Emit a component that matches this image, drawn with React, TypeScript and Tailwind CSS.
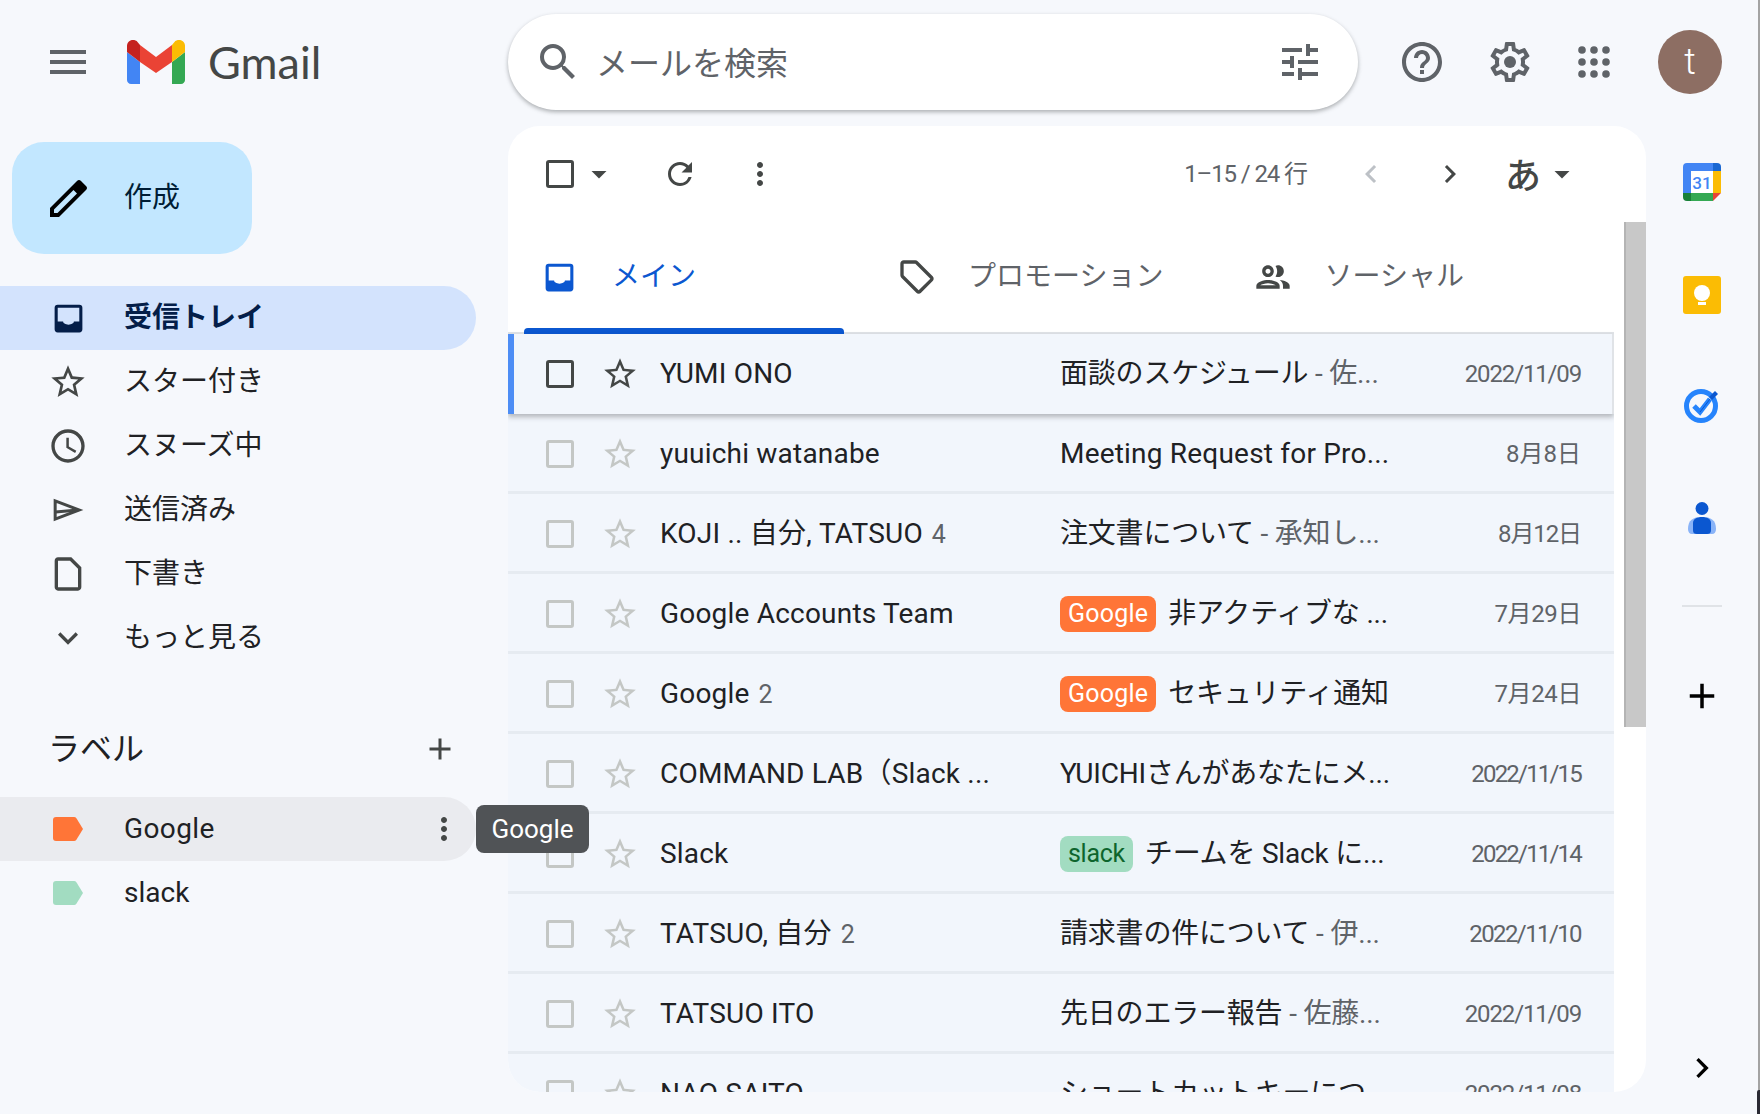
import React from "react";

const jp = "font-['Roboto','Noto_Sans_CJK_JP',sans-serif]";

const Icon = ({ d, className, children }: any) => (
  <svg viewBox="0 0 24 24" fill="currentColor" className={className}>
    {d && <path d={d} fillRule="evenodd" />}
    {children}
  </svg>
);

const paths = {
  menu: "M3 18h18v-2H3v2zm0-5h18v-2H3v2zm0-7v2h18V6H3z",
  search:
    "M15.5 14h-.79l-.28-.27A6.471 6.471 0 0 0 16 9.5 6.5 6.5 0 1 0 9.5 16c1.61 0 3.09-.59 4.23-1.57l.27.28v.79l5 4.99L20.49 19l-4.99-5zm-6 0C7.01 14 5 11.99 5 9.5S7.01 5 9.5 5 14 7.01 14 9.5 11.99 14 9.5 14z",
  tune: "M3 17v2h6v-2H3zM3 5v2h10V5H3zm10 16v-2h8v-2h-8v-2h-2v6h2zM7 9v2H3v2h4v2h2V9H7zm14 4v-2H11v2h10zm-6-4h2V7h4V5h-4V3h-2v6z",
  help: "M11 18h2v-2h-2v2zm1-16C6.48 2 2 6.48 2 12s4.48 10 10 10 10-4.48 10-10S17.52 2 12 2zm0 18c-4.41 0-8-3.59-8-8s3.59-8 8-8 8 3.59 8 8-3.59 8-8 8zm0-14c-2.21 0-4 1.79-4 4h2c0-1.1.9-2 2-2s2 .9 2 2c0 2-3 1.75-3 5h2c0-2.25 3-2.5 3-5 0-2.21-1.79-4-4-4z",
  gear: "M19.43 12.98c.04-.32.07-.64.07-.98 0-.34-.03-.66-.07-.98l2.11-1.65c.19-.15.24-.42.12-.64l-2-3.46c-.09-.16-.26-.25-.44-.25-.06 0-.12.01-.17.03l-2.49 1c-.52-.4-1.08-.73-1.69-.98l-.38-2.65C14.46 2.18 14.25 2 14 2h-4c-.25 0-.46.18-.49.42l-.38 2.65c-.61.25-1.17.59-1.69.98l-2.49-1c-.06-.02-.12-.03-.18-.03-.17 0-.34.09-.43.25l-2 3.46c-.13.22-.07.49.12.64l2.11 1.65c-.04.32-.07.65-.07.98 0 .33.03.66.07.98l-2.11 1.65c-.19.15-.24.42-.12.64l2 3.46c.09.16.26.25.44.25.06 0 .12-.01.17-.03l2.49-1c.52.4 1.08.73 1.69.98l.38 2.65c.03.24.24.42.49.42h4c.25 0 .46-.18.49-.42l.38-2.65c.61-.25 1.17-.59 1.69-.98l2.49 1c.06.02.12.03.18.03.17 0 .34-.09.43-.25l2-3.46c.12-.22.07-.49-.12-.64l-2.11-1.65zm-1.98-1.71c.04.31.05.52.05.73 0 .21-.02.43-.05.73l-.14 1.13.89.7 1.08.84-.7 1.21-1.27-.51-1.04-.42-.9.68c-.43.32-.84.56-1.25.73l-1.06.43-.16 1.13-.2 1.35h-1.4l-.19-1.35-.16-1.13-1.06-.43c-.43-.18-.83-.41-1.23-.71l-.91-.7-1.06.43-1.27.51-.7-1.21 1.08-.84.89-.7-.14-1.13c-.03-.31-.05-.54-.05-.74s.02-.43.05-.73l.14-1.13-.89-.7-1.08-.84.7-1.21 1.27.51 1.04.42.9-.68c.43-.32.84-.56 1.25-.73l1.06-.43.16-1.13.2-1.35h1.39l.19 1.35.16 1.13 1.06.43c.43.18.83.41 1.23.71l.91.7 1.06-.43 1.27-.51.7 1.21-1.07.85-.89.7.14 1.13z",
  inbox:
    "M19 3H5a2 2 0 0 0-2 2v14a2 2 0 0 0 2 2h14a2 2 0 0 0 2-2V5a2 2 0 0 0-2-2zM5 5h14v9h-3.500c0 1-1.500 2-3.500 2s-3.500-1-3.500-2H5z",
  star: "M22 9.24l-7.19-.62L12 2 9.19 8.63 2 9.24l5.46 4.73L5.82 21 12 17.27 18.18 21l-1.63-7.03L22 9.24zM12 15.4l-3.76 2.27 1-4.28-3.32-2.88 4.38-.38L12 6.1l1.71 4.04 4.38.38-3.32 2.88 1 4.28L12 15.4z",
  clock:
    "M11.99 2C6.47 2 2 6.48 2 12s4.47 10 9.99 10C17.52 22 22 17.52 22 12S17.52 2 11.99 2zM12 20c-4.42 0-8-3.58-8-8s3.58-8 8-8 8 3.58 8 8-3.58 8-8 8zm.5-13H11v6l5.25 3.15.75-1.23-4.5-2.67z",
  draft:
    "M14 2H6c-1.1 0-2 .9-2 2v16c0 1.1.9 2 2 2h12c1.1 0 2-.9 2-2V8l-6-6zm4 18H6V4h7.17L18 8.83V20z",
  expand: "M16.59 8.59L12 13.17 7.41 8.59 6 10l6 6 6-6z",
  add: "M19 13h-6v6h-2v-6H5v-2h6V5h2v6h6v2z",
  more: "M12 8c1.1 0 2-.9 2-2s-.9-2-2-2-2 .9-2 2 .9 2 2 2zm0 2c-1.1 0-2 .9-2 2s.9 2 2 2 2-.9 2-2-.9-2-2-2zm0 6c-1.1 0-2 .9-2 2s.9 2 2 2 2-.9 2-2-.9-2-2-2z",
  refresh:
    "M17.65 6.35A7.958 7.958 0 0 0 12 4c-4.42 0-7.99 3.58-7.99 8s3.57 8 7.99 8c3.73 0 6.84-2.55 7.73-6h-2.08A5.99 5.99 0 0 1 12 18c-3.31 0-6-2.69-6-6s2.69-6 6-6c1.66 0 3.14.69 4.22 1.78L13 11h7V4l-2.35 2.35z",
  left: "M15.41 7.41L14 6l-6 6 6 6 1.41-1.41L10.83 12z",
  right: "M10 6L8.59 7.41 13.17 12l-4.58 4.59L10 18l6-6z",
  caret: "M7 10l5 5 5-5z",
  tag: "M21.41 11.58l-9-9C12.05 2.22 11.55 2 11 2H4c-1.1 0-2 .9-2 2v7c0 .55.22 1.05.59 1.42l9 9c.36.36.86.58 1.41.58.55 0 1.05-.22 1.41-.59l7-7c.37-.36.59-.86.59-1.41 0-.55-.23-1.06-.59-1.42zM13 20.01L4 11V4h7v-.01l9 9-7 7.02z",
  people:
    "M9 13.75c-2.34 0-7 1.17-7 3.5V19h14v-1.75c0-2.33-4.66-3.5-7-3.5zM4.34 17c.84-.58 2.87-1.25 4.66-1.25s3.82.67 4.66 1.25H4.34zM9 12c1.93 0 3.5-1.57 3.5-3.5S10.93 5 9 5 5.500 6.57 5.500 8.500 7.070 12 9 12zm0-5c.83 0 1.5.67 1.5 1.5S9.83 10 9 10s-1.5-.67-1.5-1.5S8.170 7 9 7zm7.040 6.810c1.160.84 1.960 1.960 1.960 3.440V19h4v-1.750c0-2.020-3.500-3.170-5.960-3.440zM15 12c1.930 0 3.500-1.570 3.500-3.500S16.930 5 15 5c-.54 0-1.040.13-1.500.35.63.89 1 1.980 1 3.150s-.37 2.260-1 3.150c.46.22.96.35 1.500.35z",
};

const SendIcon = ({ className }: any) => (
  <svg viewBox="0 0 24 24" fill="none" stroke="currentColor" strokeWidth="1.800" className={className}>
    <path d="M4.300 6.500L18.700 12L4.300 17.500Z" />
    <path d="M4.500 13.200L18 12" />
  </svg>
);

const PencilIcon = () => (
  <svg viewBox="0 0 37 37" className="w-[37px] h-[37px] text-black" fill="currentColor">
    <path
      fillRule="evenodd"
      d="M0 37V28L27 1q2-2 4 0l5 5q2 2 0 4L9 37ZM4 29.500V33H7.500L27 13.500 23.500 10Z"
    />
  </svg>
);

const GmailLogo = () => (
  <svg viewBox="0 0 58 44" className="w-[58px] h-[44px]">
    <path d="M4 44h9V22L0 12v28c0 2.2 1.8 4 4 4z" fill="#4285f4" />
    <path d="M45 44h9c2.2 0 4-1.8 4-4V12L45 22z" fill="#34a853" />
    <path d="M45 5v17l13-10V6c0-5-5.7-7.9-9.7-4.9z" fill="#fbbc04" />
    <path d="M13 22V5l16 12L45 5v17L29 33z" fill="#ea4335" />
    <path d="M0 6v6l13 10V5L9.700 1.100C5.700-1.900 0 1 0 6z" fill="#c5221f" />
  </svg>
);

const Calendar = () => (
  <svg viewBox="0 0 38 38" className="w-[38px] h-[38px]">
    <path d="M30 0H4a4 4 0 0 0-4 4v26h8V8h22z" fill="#4285f4" />
    <rect x="8" y="8" width="22" height="22" fill="#fff" />
    <path d="M30 0h4a4 4 0 0 1 4 4v4h-8z" fill="#1967d2" />
    <rect x="30" y="8" width="8" height="22" fill="#fbbc04" />
    <path d="M8 30h22v8H8z" fill="#34a853" />
    <path d="M0 30h8v8H4a4 4 0 0 1-4-4z" fill="#188038" />
    <path d="M30 30h8l-8 8z" fill="#ea4335" />
    <text x="19" y="26" textAnchor="middle" fontSize="17" fontFamily="Roboto" fontWeight="500" fill="#4285f4">
      31
    </text>
  </svg>
);

const Keep = () => (
  <svg viewBox="0 0 38 38" className="w-[38px] h-[38px]">
    <rect width="38" height="38" rx="3" fill="#fbbc04" />
    <circle cx="19" cy="17" r="8" fill="#fff" />
    <rect x="15" y="20" width="8" height="4" fill="#fff" />
    <rect x="15" y="26" width="8" height="3" fill="#fff" />
  </svg>
);

const Tasks = () => (
  <svg viewBox="0 0 36 36" className="w-[36px] h-[36px]">
    <circle cx="17" cy="19" r="14.500" fill="none" stroke="#2684fc" strokeWidth="5" />
    <path d="M10 19l6 6L26 12" fill="none" stroke="#2684fc" strokeWidth="5" />
    <path d="M25 10l6-6 3 3-6 6z" fill="#0b57d0" />
    <path d="M16 25L26 12" fill="none" stroke="#0b57d0" strokeWidth="1" />
  </svg>
);

const Contacts = () => (
  <svg viewBox="0 0 28 32" className="w-[28px] h-[32px]">
    <circle cx="14" cy="6.500" r="6.500" fill="#0b57d0" />
    <path d="M0 27c0-9 5-12 14-12s14 3 14 12c0 3-1.500 5-4 5H4c-2.500 0-4-2-4-5z" fill="#8ab4f8" />
    <path d="M5 21c0-4 4-6 9-6s9 2 9 6v7c0 3-1.500 4-4 4H9c-2.500 0-4-1-4-4z" fill="#0b57d0" />
  </svg>
);

const LabelTag = ({ color }: any) => (
  <svg viewBox="0 0 30 24" className="w-[30px] h-[24px]">
    <path d="M3 0h18c1 0 1.800.4 2.400 1.200L30 12l-6.600 10.800C22.800 23.600 22 24 21 24H3a3 3 0 0 1-3-3V3a3 3 0 0 1 3-3z" fill={color} />
  </svg>
);

const Check = ({ active }: any) => (
  <div
    className={`w-[28px] h-[28px] rounded-[3px] border-[3px] shrink-0 ${
      active ? "border-[#444746]" : "border-[#c4c7c5]"
    }`}
  />
);

const navItems = [
  { icon: paths.inbox, label: "受信トレイ", active: true, size: "w-[37px] h-[37px] ml-[50px] mr-[37px]" },
  { icon: paths.star, label: "スター付き" },
  { icon: paths.clock, label: "スヌーズ中" },
  { send: true, label: "送信済み" },
  { icon: paths.draft, label: "下書き" },
  { icon: paths.expand, label: "もっと見る" },
];

const rows = [
  { from: "YUMI ONO", subject: "面談のスケジュール", snippet: " - 佐...", date: "2022/11/09", dateClass: "tracking-[-1.15px]", selected: true },
  { from: "yuuichi watanabe", subject: "Meeting Request for Pro...", date: "8月8日" },
  { from: "KOJI .. 自分, TATSUO", count: "4", subject: "注文書について", snippet: " - 承知し...", date: "8月12日", dateClass: "tracking-[-1.1px]" },
  { from: "Google Accounts Team", badge: "Google", subject: "非アクティブな ...", date: "7月29日", dateClass: "tracking-[-0.4px]" },
  { from: "Google", count: "2", badge: "Google", subject: "セキュリティ通知", date: "7月24日", dateClass: "tracking-[-0.4px]" },
  { from: "COMMAND LAB（Slack ...", subject: "YUICHIさんがあなたにメ...", date: "2022/11/15", dateClass: "tracking-[-1.8px]" },
  { from: "Slack", badge: "slack", subject: "チームを Slack に...", date: "2022/11/14", dateClass: "tracking-[-1.8px]" },
  { from: "TATSUO, 自分", count: "2", subject: "請求書の件について", snippet: " - 伊...", date: "2022/11/10", dateClass: "tracking-[-1.6px]" },
  { from: "TATSUO ITO", subject: "先日のエラー報告", snippet: " - 佐藤...", date: "2022/11/09", dateClass: "tracking-[-1.15px]" },
  { from: "NAO SAITO", subject: "ショートカットキーにつ...", date: "2022/11/08", dateClass: "tracking-[-1.15px]" },
];

const MailRow = ({ row }: any) => (
  <div
    className={`flex items-center h-[80px] shrink-0 text-[28px] tracking-[0.2px] text-[#202124] bg-[#f2f6fc] ${
      row.selected
        ? "border-l-[6px] border-l-[#4d8df5] border-r-2 border-r-[#e0e3e7] shadow-[0_3px_5px_rgba(60,64,67,0.35)] relative pl-[32px]"
        : "border-b-[3px] border-b-[#e6ebf1] pl-[38px] pt-[3px]"
    }`}
  >
    <Check active={row.selected} />
    <Icon
      d={paths.star}
      className={`w-[38px] h-[38px] ml-[27px] shrink-0 ${
        row.selected ? "text-[#444746]" : "text-[#c4c7c5]"
      }`}
    />
    <div className="w-[400px] ml-[21px] shrink-0 whitespace-nowrap">
      {row.from}
      {row.count && <span className="ml-[9px] text-[25px] text-[#5f6368]">{row.count}</span>}
    </div>
    <div className="flex-1 flex items-center whitespace-nowrap min-w-0">
      {row.badge && (
        <span
          className={`rounded-[8px] h-[36px] flex items-center px-[8px] mr-[12px] ${
            row.badge === "Google"
              ? "bg-[#ff7537] text-white text-[25px]"
              : "bg-[#a2dcc1] text-[#0d652d] text-[25px] tracking-[-0.3px]"
          }`}
        >
          {row.badge}
        </span>
      )}
      <span className={row.subject.startsWith("Meeting") ? "" : "tracking-[-0.2px]"}>
        {row.subject}
        {row.snippet && <span className="text-[#5f6368]">{row.snippet}</span>}
      </span>
    </div>
    <div
      className={`text-[24px] text-[#5f6368] whitespace-nowrap ${row.selected ? "pr-[31px]" : "pr-[33px]"} ${
        row.dateClass || "tracking-normal"
      }`}
    >
      {row.date}
    </div>
  </div>
);

const App = () => {
  return (
    <div className={`relative w-[1760px] h-[1114px] bg-[#f6f8fc] overflow-hidden ${jp}`}>
      <div className="w-full h-full border-r-2 border-r-[#a3a3a3] flex flex-col">
        {/* header */}
        <header className="h-[126px] shrink-0 flex items-center pb-[2px]">
          <div className="w-[508px] shrink-0 flex items-center">
            <Icon d={paths.menu} className="w-[48px] h-[48px] ml-[44px] text-[#5f6368]" />
            <div className="ml-[35px] flex">
              <GmailLogo />
            </div>
            <span className="ml-[23px] text-[45px] leading-none text-[#444746] font-['Lato','Roboto',sans-serif]">
              Gmail
            </span>
          </div>
          <div className="w-[850px] h-[96px] shrink-0 bg-white rounded-[48px] shadow-[0_2px_4px_rgba(60,64,67,0.4)] flex items-center">
            <Icon d={paths.search} className="w-[48px] h-[48px] ml-[26px] text-[#5f6368]" />
            <span className="ml-[14px] pt-[3px] text-[32px] text-[#5f6368]">メールを検索</span>
            <Icon d={paths.tune} className="w-[48px] h-[48px] ml-auto mr-[34px] text-[#5f6368]" />
          </div>
          <Icon d={paths.help} className="w-[48px] h-[48px] ml-[40px] text-[#5f6368]" />
          <Icon d={paths.gear} className="w-[48px] h-[48px] ml-[40px] text-[#5f6368]">
            <circle cx="12" cy="12" r="3" />
          </Icon>
          <svg viewBox="0 0 32 32" className="w-[32px] h-[32px] ml-[44px] text-[#5f6368]" fill="currentColor">
            {[4, 16, 28].map((y) =>
              [4, 16, 28].map((x) => <circle key={`${x}-${y}`} cx={x} cy={y} r="3.800" />)
            )}
          </svg>
          <div className="w-[64px] h-[64px] ml-[48px] rounded-full bg-[#8d6e63] flex items-center justify-center text-white text-[36px] font-light">
            t
          </div>
        </header>

        <div className="flex flex-1 min-h-0">
          {/* sidebar */}
          <aside className="w-[508px] shrink-0 relative">
            <div className="ml-[12px] mt-[16px] w-[240px] h-[112px] rounded-[32px] bg-[#c2e7ff] flex items-center text-[28px] text-[#001d35]">
              <div className="ml-[38px] flex">
                <PencilIcon />
              </div>
              <span className="ml-[37px]">作成</span>
            </div>
            <nav className="mt-[32px]">
              {navItems.map((item) => (
                <div
                  key={item.label}
                  className={`w-[476px] h-[64px] rounded-r-[32px] flex items-center text-[28px] ${
                    item.active ? "bg-[#d3e3fd] text-[#041e49] font-bold" : "text-[#202124]"
                  }`}
                >
                  {item.send ? (
                    <SendIcon className="w-[40px] h-[40px] ml-[48px] mr-[36px] text-[#444746]" />
                  ) : (
                    <Icon
                      d={item.icon}
                      className={
                        item.active
                          ? `text-[#041e49] ${item.size}`
                          : "w-[40px] h-[40px] ml-[48px] mr-[36px] text-[#444746]"
                      }
                    />
                  )}
                  <span>{item.label}</span>
                </div>
              ))}
            </nav>
            <div className="mt-[47px] h-[64px] w-[476px] flex items-center text-[32px] text-[#202124]">
              <span className="ml-[48px]">ラベル</span>
              <Icon d={paths.add} className="w-[36px] h-[36px] ml-auto mr-[18px] text-[#444746]" />
            </div>
            <div className="mt-[16px]">
              <div className="w-[476px] h-[64px] rounded-r-[32px] bg-[#eaebef] flex items-center text-[28px] text-[#202124]">
                <div className="ml-[53px] flex">
                  <LabelTag color="#ff7537" />
                </div>
                <span className="ml-[41px] tracking-[0.4px]">Google</span>
                <Icon d={paths.more} className="w-[36px] h-[36px] ml-auto mr-[14px] text-[#444746]" />
              </div>
              <div className="w-[476px] h-[64px] flex items-center text-[28px] text-[#202124]">
                <div className="ml-[53px] flex">
                  <LabelTag color="#a2dcc1" />
                </div>
                <span className="ml-[41px]">slack</span>
              </div>
            </div>
            {/* tooltip over the mail list */}
            <div className="absolute left-[476px] top-[679px] z-10 w-[113px] h-[48px] rounded-[8px] bg-[#505356] text-white text-[26px] flex items-center justify-center">
              Google
            </div>
          </aside>

          {/* mail panel */}
          <main className="w-[1138px] shrink-0 h-[966px] bg-white rounded-[32px] overflow-hidden flex flex-col">
            <div className="h-[96px] shrink-0 flex items-center text-[#444746]">
              <div className="ml-[38px] flex">
                <Check active />
              </div>
              <Icon d={paths.caret} className="w-[36px] h-[36px] ml-[7px]" />
              <Icon d={paths.refresh} className="w-[36px] h-[36px] ml-[45px]" />
              <Icon d={paths.more} className="w-[36px] h-[36px] ml-[44px]" />
              <span className="ml-auto text-[24px] tracking-[-1.1px] text-[#5f6368]">1–15 / 24 行</span>
              <Icon d={paths.left} className="w-[36px] h-[36px] ml-[46px] text-[#bdc1c6]" />
              <Icon d={paths.right} className="w-[36px] h-[36px] ml-[43px]" />
              <span className="ml-[37px] mt-[5px] text-[36px] leading-none font-medium">あ</span>
              <Icon d={paths.caret} className="w-[36px] h-[36px] ml-[3px] mr-[66px]" />
            </div>
            <div className="flex flex-1 min-h-0">
              <div className="w-[1106px] shrink-0 flex flex-col overflow-hidden">
                <div className="h-[112px] shrink-0 flex items-center relative text-[28px] text-[#5f6368] border-b-2 border-b-[#e0e3e7]">
                  <Icon d={paths.inbox} className="w-[37px] h-[37px] ml-[33px] text-[#0b57d0]" />
                  <span className="ml-[34px] text-[#0b57d0]">メイン</span>
                  <Icon d={paths.tag} className="w-[40px] h-[40px] ml-[201px] text-[#444746]" />
                  <span className="ml-[31px]">プロモーション</span>
                  <Icon d={paths.people} className="w-[40px] h-[40px] ml-[90px] text-[#444746]" />
                  <span className="ml-[31px]">ソーシャル</span>
                  <div className="absolute left-[16px] bottom-[-2px] w-[320px] h-[6px] rounded-t-[4px] bg-[#0b57d0]" />
                </div>
                {rows.map((row) => (
                  <MailRow key={row.from + row.date} row={row} />
                ))}
              </div>
              <div className="ml-[10px] w-[22px] shrink-0">
                <div className="h-[505px] bg-[#c8c8c8] border-l-2 border-l-[#b4b4b4]" />
              </div>
            </div>
          </main>

          {/* right rail */}
          <aside className="flex-1 flex flex-col items-center text-[#1f1f1f] h-[966px]">
            <div className="mt-[37px] flex">
              <Calendar />
            </div>
            <div className="mt-[75px] flex">
              <Keep />
            </div>
            <div className="mt-[73px] flex">
              <Tasks />
            </div>
            <div className="mt-[79px] flex">
              <Contacts />
            </div>
            <div className="mt-[71px] w-[40px] h-[2px] bg-[#e0e3e7]" />
            <Icon d={paths.add} className="w-[42px] h-[42px] mt-[68px] text-black" />
            <Icon d={paths.right} className="w-[40px] h-[40px] mt-auto mb-[4px] text-black" />
          </aside>
        </div>
      </div>
      {/* dark window corner at the bottom right */}
      <div className="absolute right-0 bottom-0 w-[3px] h-[24px] rounded-tl-[2px] bg-[#2a2a33]" />
    </div>
  );
};

export default App;
